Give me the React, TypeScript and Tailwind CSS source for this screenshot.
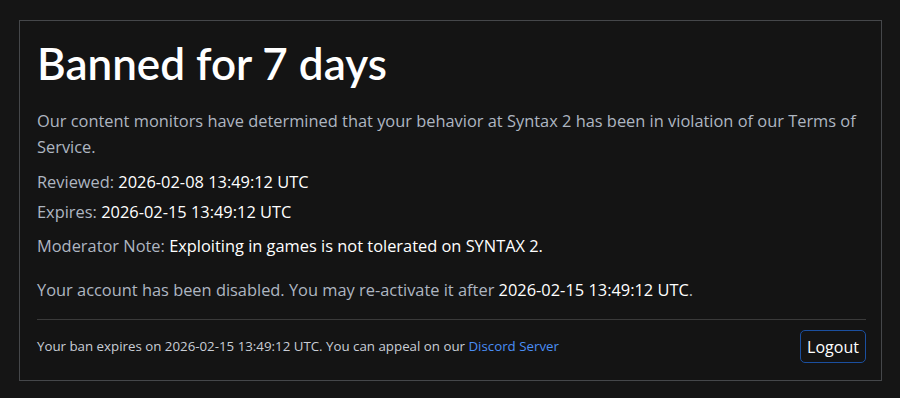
export default function App() {
  return (
    <div className="min-h-[398px] bg-[#151515] pt-[20px] pl-[19px] font-['Open_Sans',sans-serif]">
      <div className="w-[863px] border border-[#45474a] bg-[#141414] pl-[17px] pr-[15px] pt-[15px] pb-[17px]">
        <h1 className="font-['Lato',sans-serif] text-[44px] font-semibold leading-[54px] text-white">Banned for 7 days</h1>
        <p className="mt-[18px] text-[16.4px] leading-[26px] text-[#aeb6c1]">
          Our content monitors have determined that your behavior at Syntax 2 has been in violation of our Terms of Service.
        </p>
        <p className="mt-[9px] text-[16.4px] leading-[26px] text-[#aeb6c1]">
          Reviewed: <span className="text-white">2026-02-08 13:49:12 UTC</span>
        </p>
        <p className="mt-[4px] text-[16.4px] leading-[26px] text-[#aeb6c1]">
          Expires: <span className="text-white">2026-02-15 13:49:12 UTC</span>
        </p>
        <p className="mt-[8px] text-[16.4px] leading-[26px] text-[#aeb6c1]">
          Moderator Note: <span className="text-white">Exploiting in games is not tolerated on SYNTAX 2.</span>
        </p>
        <p className="mt-[18px] text-[16.4px] leading-[26px] text-[#aeb6c1]">
          Your account has been disabled. You may re-activate it after{" "}
          <span className="text-white">2026-02-15 13:49:12 UTC</span>.
        </p>
        <div className="mt-[16px] border-t border-[#3a3a3a] pt-[10px] flex items-center justify-between">
          <p className="text-[13.3px] text-[#c9ced6]">
            Your ban expires on 2026-02-15 13:49:12 UTC. You can appeal on our{" "}
            <a className="text-[#4a8ef5]">Discord Server</a>
          </p>
          <button className="h-[33px] w-[66px] rounded-[5px] border border-[#1b4f9f] text-[16px] text-white">
            Logout
          </button>
        </div>
      </div>
    </div>
  );
}
